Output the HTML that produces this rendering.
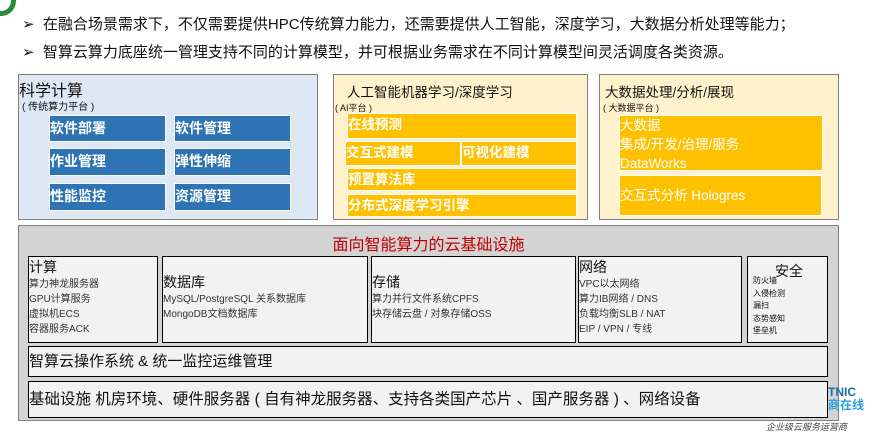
<!DOCTYPE html>
<html><head><meta charset="utf-8"><style>
*{margin:0;padding:0;box-sizing:border-box}
body{width:886px;height:436px;background:#fff;position:relative;overflow:hidden;font-family:"Liberation Sans","Noto Sans CJK SC",sans-serif;color:#111}
.a{position:absolute}
.b{border:1px solid #808080}
.blue{background:#2e74b5;border:1px solid #fff;color:#fff;font-size:14px;line-height:24px;font-weight:bold}
.y{background:#ffc000;border:1px solid #fff;color:#fff;font-size:13.5px;font-weight:bold;line-height:22px}
.s{background:#f2f2f2;border:1px solid #000}
.sm{font-size:10px;color:#333;line-height:15px}
</style></head><body>
<div class="a" style="left:-14px;top:-14px;width:30px;height:30px;border-radius:50%;border:5px solid #2a8a3a;border-left-color:#1a9bd7"></div>
<div class="a" style="left:22px;top:15px;font-size:15px;line-height:20px">➢&nbsp; 在融合场景需求下，不仅需要提供HPC传统算力能力，还需要提供人工智能，深度学习，大数据分析处理等能力；</div>
<div class="a" style="left:22px;top:43px;font-size:15px;line-height:20px">➢&nbsp; 智算云算力底座统一管理支持不同的计算模型，并可根据业务需求在不同计算模型间灵活调度各类资源。</div>

<div class="a b" style="left:18px;top:74px;width:300px;height:146px;background:#dee8f4"></div>
<div class="a" style="left:19px;top:77px;font-size:16px">科学计算</div>
<div class="a" style="left:22px;top:98px;font-size:10px">( 传统算力平台 )</div>
<div class="a blue" style="left:49px;top:115px;width:117px;height:27px">软件部署</div>
<div class="a blue" style="left:174px;top:115px;width:117px;height:27px">软件管理</div>
<div class="a blue" style="left:49px;top:148px;width:117px;height:28px">作业管理</div>
<div class="a blue" style="left:174px;top:148px;width:117px;height:28px">弹性伸缩</div>
<div class="a blue" style="left:49px;top:183px;width:117px;height:28px">性能监控</div>
<div class="a blue" style="left:174px;top:183px;width:117px;height:28px">资源管理</div>

<div class="a b" style="left:333px;top:74px;width:255px;height:146px;background:#fff2cc"></div>
<div class="a" style="left:347px;top:81px;font-size:13.5px">人工智能机器学习/深度学习</div>
<div class="a" style="left:335px;top:101px;font-size:9px">( AI平台 )</div>
<div class="a y" style="left:347px;top:113px;width:230px;height:26px">在线预测</div>
<div class="a y" style="left:345px;top:141px;width:116px;height:25px">交互式建模</div>
<div class="a y" style="left:461px;top:141px;width:116px;height:25px">可视化建模</div>
<div class="a y" style="left:347px;top:168px;width:230px;height:23px">预置算法库</div>
<div class="a y" style="left:347px;top:194px;width:230px;height:23px">分布式深度学习引擎</div>

<div class="a b" style="left:599px;top:74px;width:240px;height:146px;background:#fff2cc"></div>
<div class="a" style="left:605px;top:81px;font-size:13.5px">大数据处理/分析/展现</div>
<div class="a" style="left:603px;top:101px;font-size:9px">( 大数据平台 )</div>
<div class="a y" style="left:619px;top:115px;width:204px;height:56px;line-height:19px;font-weight:normal;font-size:13.5px">大数据<br>集成/开发/治理/服务<br>DataWorks</div>
<div class="a y" style="left:619px;top:175px;width:203px;height:41px;line-height:39px;font-weight:normal;font-size:13.5px">交互式分析 Hologres</div>

<div class="a b" style="left:18px;top:225px;width:821px;height:196px;background:#d3d3d3"></div>
<div class="a" style="left:18px;top:231px;width:821px;text-align:center;color:#c00000;font-size:16px">面向智能算力的云基础设施</div>
<div class="a s" style="left:28px;top:256px;width:130px;height:87px"><div style="font-size:14px;line-height:20px">计算</div><div class="sm">算力神龙服务器<br>GPU计算服务<br>虚拟机ECS<br>容器服务ACK</div></div>
<div class="a s" style="left:162px;top:256px;width:206px;height:87px"><div style="font-size:14px;line-height:20px;margin-top:15px">数据库</div><div class="sm">MySQL/PostgreSQL 关系数据库<br>MongoDB文档数据库</div></div>
<div class="a s" style="left:371px;top:256px;width:205px;height:87px"><div style="font-size:14px;line-height:20px;margin-top:15px">存储</div><div class="sm">算力并行文件系统CPFS<br>块存储云盘 / 对象存储OSS</div></div>
<div class="a s" style="left:578px;top:256px;width:164px;height:87px"><div style="font-size:14px;line-height:20px">网络</div><div class="sm">VPC以太网络<br>算力IB网络 / DNS<br>负载均衡SLB / NAT<br>EIP / VPN / 专线</div></div>
<div class="a s" style="left:747px;top:256px;width:81px;height:87px"><div style="font-size:14px;margin:6px 0 0 27px;line-height:16px">安全</div><div style="font-size:8px;line-height:12.5px;margin-left:5px;margin-top:-4px">防火墙<br>入侵检测<br>漏扫<br>态势感知<br>堡垒机</div></div>
<div class="a s" style="left:28px;top:346px;width:800px;height:31px;font-size:15px;line-height:30px">智算云操作系统 &amp; 统一监控运维管理</div>
<div class="a s" style="left:28px;top:381px;width:800px;height:37px;font-size:15.5px;line-height:36px">基础设施 机房环境、硬件服务器 ( 自有神龙服务器、支持各类国产芯片 、国产服务器 ) 、网络设备</div>
<div class="a" style="left:828px;top:386px;font-size:12px;font-weight:bold;color:#1a6fb0;line-height:13px">TNIC</div>
<div class="a" style="left:828px;top:399px;font-size:12px;font-weight:bold;color:#2aa0dd;line-height:13px">商在线</div>
<div class="a" style="left:766px;top:420px;font-size:9px;color:#444;font-style:italic">企业级云服务运营商</div>
</body></html>
